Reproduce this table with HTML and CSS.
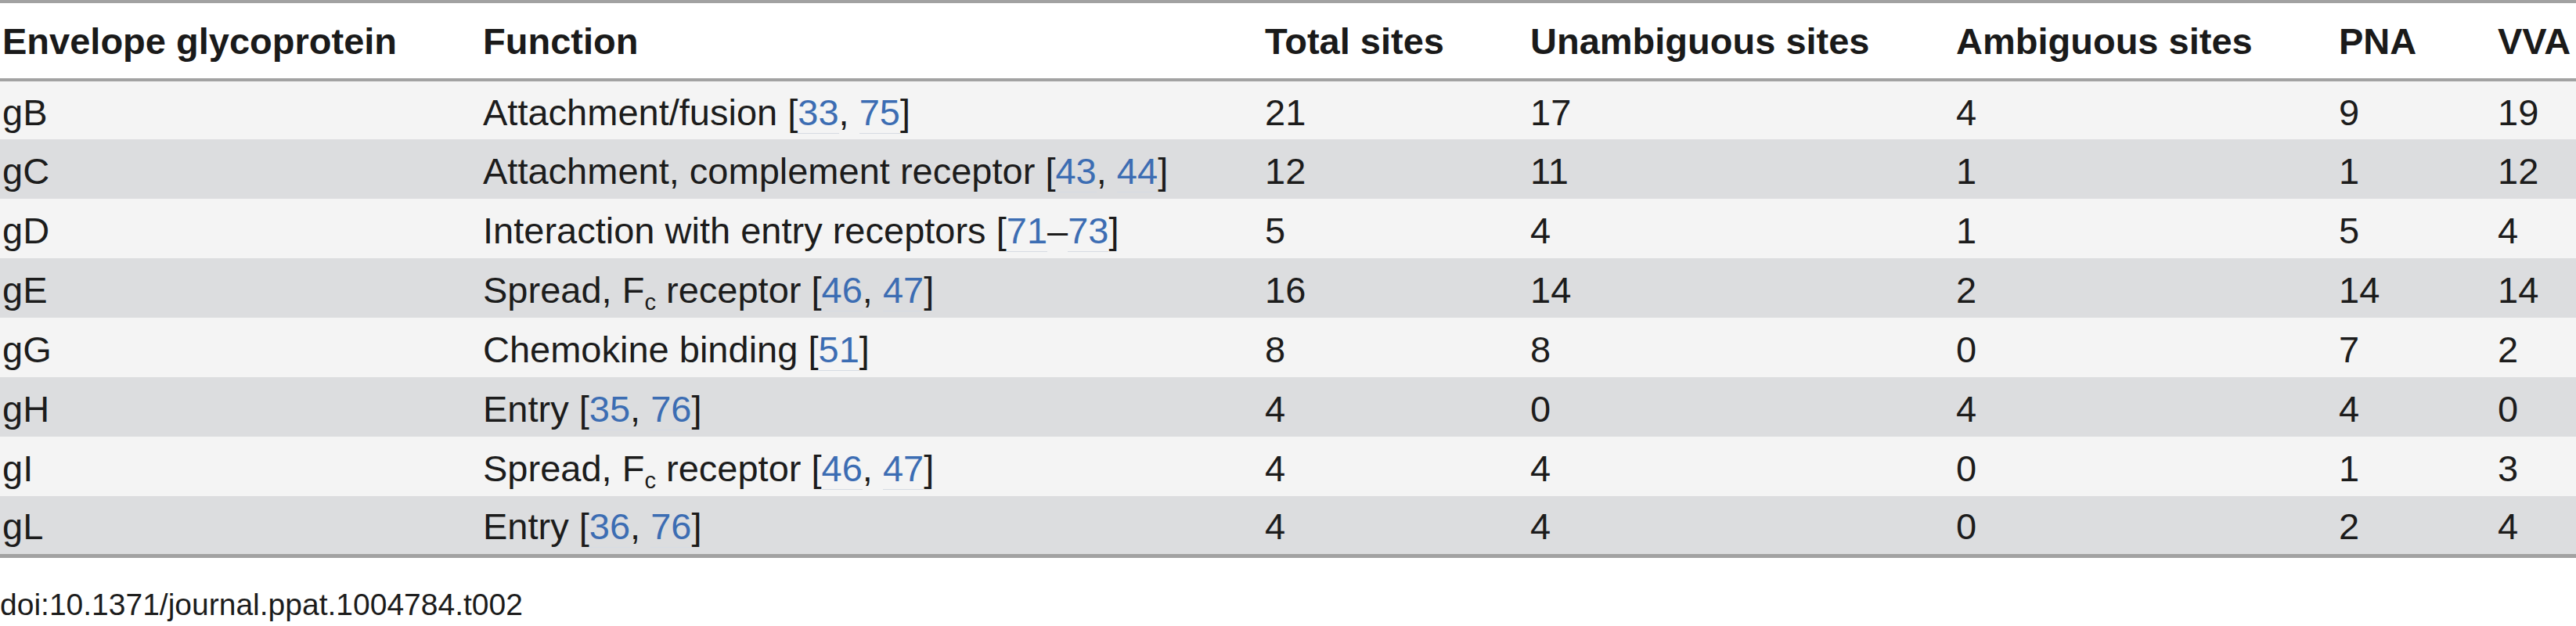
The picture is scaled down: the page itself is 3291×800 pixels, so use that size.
FILE: index.html
```html
<!DOCTYPE html>
<html>
<head>
<meta charset="utf-8">
<title>Table</title>
<link rel="stylesheet" href="styles.css">
</head>
<body>
<div class="wrap">
<table class="data">
  <colgroup>
    <col class="c1"><col class="c2"><col class="c3"><col class="c4"><col class="c5"><col class="c6"><col class="c7">
  </colgroup>
  <thead>
    <tr>
      <th>Envelope glycoprotein</th>
      <th>Function</th>
      <th>Total sites</th>
      <th>Unambiguous sites</th>
      <th>Ambiguous sites</th>
      <th>PNA</th>
      <th>VVA</th>
    </tr>
  </thead>
  <tbody>
    <tr><td>gB</td><td>Attachment/fusion [<a class="ref">33</a>, <a class="ref">75</a>]</td><td>21</td><td>17</td><td>4</td><td>9</td><td>19</td></tr>
    <tr><td>gC</td><td>Attachment, complement receptor [<a class="ref">43</a>, <a class="ref">44</a>]</td><td>12</td><td>11</td><td>1</td><td>1</td><td>12</td></tr>
    <tr><td>gD</td><td>Interaction with entry receptors [<a class="ref">71</a>–<a class="ref">73</a>]</td><td>5</td><td>4</td><td>1</td><td>5</td><td>4</td></tr>
    <tr><td>gE</td><td>Spread, F<sub>c</sub> receptor [<a class="ref">46</a>, <a class="ref">47</a>]</td><td>16</td><td>14</td><td>2</td><td>14</td><td>14</td></tr>
    <tr><td>gG</td><td>Chemokine binding [<a class="ref">51</a>]</td><td>8</td><td>8</td><td>0</td><td>7</td><td>2</td></tr>
    <tr><td>gH</td><td>Entry [<a class="ref">35</a>, <a class="ref">76</a>]</td><td>4</td><td>0</td><td>4</td><td>4</td><td>0</td></tr>
    <tr><td>gI</td><td>Spread, F<sub>c</sub> receptor [<a class="ref">46</a>, <a class="ref">47</a>]</td><td>4</td><td>4</td><td>0</td><td>1</td><td>3</td></tr>
    <tr><td>gL</td><td>Entry [<a class="ref">36</a>, <a class="ref">76</a>]</td><td>4</td><td>4</td><td>0</td><td>2</td><td>4</td></tr>
  </tbody>
</table>
<p class="doi">doi:10.1371/journal.ppat.1004784.t002</p>
</div>
</body>
</html>
```

FILE: styles.css
```css
html, body {
  margin: 0;
  padding: 0;
  background: #ffffff;
}

.wrap {
  font-family: "Liberation Sans", Arial, sans-serif;
  color: #1c1c1c;
}

.data {
  width: 100%;
  table-layout: fixed;
  border-collapse: collapse;
  border-top: 4px solid #a2a2a2;
  border-bottom: 5px solid #a2a2a2;
}

.c1 { width: 614px; }
.c2 { width: 999px; }
.c3 { width: 339px; }
.c4 { width: 544px; }
.c5 { width: 489px; }
.c6 { width: 203px; }
.c7 { width: auto; }

.data th {
  font-size: 47px;
  font-weight: bold;
  text-align: left;
  white-space: nowrap;
  height: 96px;
  padding: 0 0 0 3px;
  vertical-align: middle;
  border-bottom: 4px solid #a2a2a2;
  background: #ffffff;
  color: #1a1a1a;
}

.data td {
  font-size: 47px;
  text-align: left;
  white-space: nowrap;
  height: 76px;
  padding: 4px 0 0 3px;
  box-sizing: border-box;
  vertical-align: middle;
}

.data tbody tr:nth-child(odd) td {
  background: #f4f4f4;
}

.data tbody tr:nth-child(even) td {
  background: #dcdddf;
}

.ref {
  color: #3c6db3;
  text-decoration: none;
  border-bottom: 1px solid #d6dbe3;
}

.data sub {
  font-size: 0.62em;
  vertical-align: -0.32em;
  line-height: 0;
}

.doi {
  font-size: 39px;
  margin: 38px 0 0 0;
  color: #1c1c1c;
}
```
